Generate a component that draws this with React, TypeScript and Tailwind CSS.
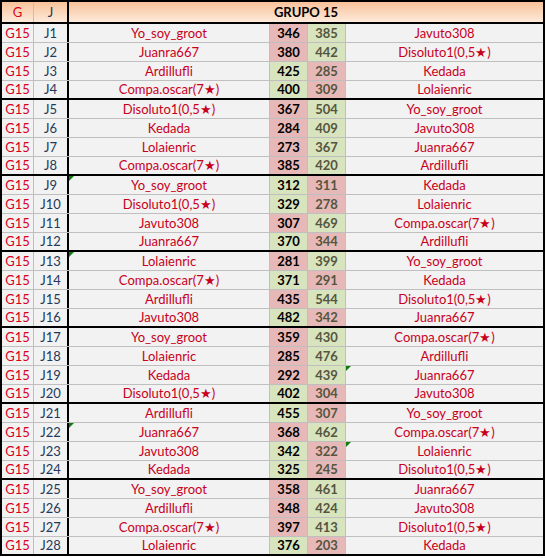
import React from 'react';

type Match = [string, number, number, string];

const matches: Match[] = [
  ['Yo_soy_groot', 346, 385, 'Javuto308'],
  ['Juanra667', 380, 442, 'Disoluto1(0,5★)'],
  ['Ardillufli', 425, 285, 'Kedada'],
  ['Compa.oscar(7★)', 400, 309, 'Lolaienric'],
  ['Disoluto1(0,5★)', 367, 504, 'Yo_soy_groot'],
  ['Kedada', 284, 409, 'Javuto308'],
  ['Lolaienric', 273, 367, 'Juanra667'],
  ['Compa.oscar(7★)', 385, 420, 'Ardillufli'],
  ['Yo_soy_groot', 312, 311, 'Kedada'],
  ['Disoluto1(0,5★)', 329, 278, 'Lolaienric'],
  ['Javuto308', 307, 469, 'Compa.oscar(7★)'],
  ['Juanra667', 370, 344, 'Ardillufli'],
  ['Lolaienric', 281, 399, 'Yo_soy_groot'],
  ['Compa.oscar(7★)', 371, 291, 'Kedada'],
  ['Ardillufli', 435, 544, 'Disoluto1(0,5★)'],
  ['Javuto308', 482, 342, 'Juanra667'],
  ['Yo_soy_groot', 359, 430, 'Compa.oscar(7★)'],
  ['Lolaienric', 285, 476, 'Ardillufli'],
  ['Kedada', 292, 439, 'Juanra667'],
  ['Disoluto1(0,5★)', 402, 304, 'Javuto308'],
  ['Ardillufli', 455, 307, 'Yo_soy_groot'],
  ['Juanra667', 368, 462, 'Compa.oscar(7★)'],
  ['Javuto308', 342, 322, 'Lolaienric'],
  ['Kedada', 325, 245, 'Disoluto1(0,5★)'],
  ['Yo_soy_groot', 358, 461, 'Juanra667'],
  ['Ardillufli', 348, 424, 'Javuto308'],
  ['Compa.oscar(7★)', 397, 413, 'Disoluto1(0,5★)'],
  ['Lolaienric', 376, 203, 'Kedada'],
];

// cells with the little green comment marker (row index -> column)
const markers: Record<number, 'left' | 'right'> = {
  8: 'left',
  12: 'left',
  18: 'right',
  21: 'left',
  22: 'right',
};

const Marker = () => (
  <span className="absolute left-0 top-0 w-0 h-0 border-t-[5px] border-r-[5px] border-t-[#107c10] border-r-transparent" />
);

const PINK = 'bg-[#e6b9b8]';
const GREEN = 'bg-[#d7e4bd]';

export default function App() {
  return (
    <div
      className="w-[545px] bg-[#f2f2f2] border-2 border-black text-[13px] leading-none select-none"
      style={{ fontFamily: 'Lato, "Liberation Sans", sans-serif' }}
    >
      {/* Header */}
      <div className="flex h-[22px] border-b-2 border-black bg-gradient-to-b from-[#f8c29a] to-[#fdeadb]">
        <div className="w-[32px] border-r border-[#bfbfbf] flex items-center justify-center text-[#d9001b]">G</div>
        <div className="w-[35px] border-r-2 border-black flex items-center justify-center text-[#1f3556]">J</div>
        <div className="flex-1 flex items-center justify-center font-bold text-black">GRUPO 15</div>
      </div>

      {matches.map(([home, a, b, away], i) => {
        const groupEnd = i % 4 === 3;
        const last = i === matches.length - 1;
        const rowBorder = last
          ? 'h-[17px]'
          : groupEnd
            ? 'h-[19px] border-b-2 border-black'
            : 'h-[19px] border-b border-[#bfbfbf]';
        const homeWins = a > b;
        return (
          <div key={i} className={`flex ${rowBorder}`}>
            <div className="w-[32px] border-r border-[#bfbfbf] flex items-center justify-center text-[#d9001b]">G15</div>
            <div className="w-[35px] border-r-2 border-black flex items-center justify-center text-[#24395a]">J{i + 1}</div>
            <div className="relative w-[201px] border-r border-[#bfbfbf] flex items-center justify-center text-[#c8001c]">
              {markers[i] === 'left' && <Marker />}
              {home}
            </div>
            <div className={`w-[38px] border-r border-[#bfbfbf] flex items-center justify-center font-bold text-black ${homeWins ? GREEN : PINK}`}>
              {a}
            </div>
            <div className={`w-[38px] border-r border-[#bfbfbf] flex items-center justify-center font-bold text-[#55553f] ${homeWins ? PINK : GREEN}`}>
              {b}
            </div>
            <div className="relative flex-1 flex items-center justify-center text-[#c8001c]">
              {markers[i] === 'right' && <Marker />}
              {away}
            </div>
          </div>
        );
      })}
    </div>
  );
}
